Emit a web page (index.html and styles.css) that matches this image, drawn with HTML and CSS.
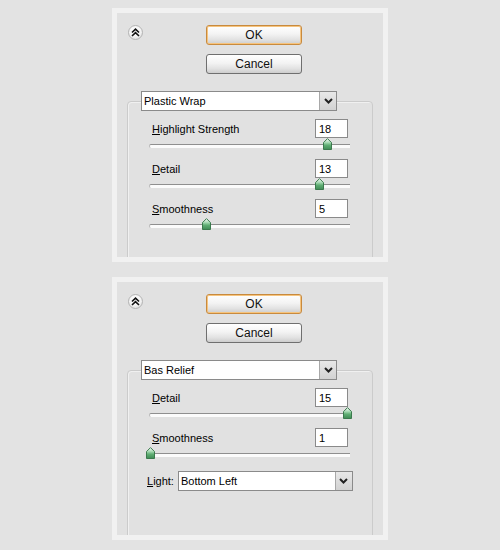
FILE: index.html
```html
<!DOCTYPE html>
<html lang="en">
<head>
    <meta charset="UTF-8">
    <title>Filter Options</title>
    <link rel="stylesheet" href="styles.css">
</head>
<body>
<!-- shared fill for the slider thumbs -->
<svg class="defs" width="0" height="0">
    <defs>
        <linearGradient id="thumbFill" x1="0" y1="0" x2="0" y2="1">
            <stop offset="0" stop-color="#ffffff"/>
            <stop offset="0.35" stop-color="#a8dab4"/>
            <stop offset="0.6" stop-color="#5fae73"/>
            <stop offset="1" stop-color="#3f8a55"/>
        </linearGradient>
    </defs>
</svg>
<main class="page">

    <!-- Plastic Wrap -->
    <section class="dialog dialog-short">
        <div class="dialog-head">
            <button class="collapse" type="button">
                <svg width="9" height="9" viewBox="0 0 9 9"><path d="M1 4.5 L4.5 1.2 L8 4.5 M1 8 L4.5 4.7 L8 8" fill="none" stroke="#111" stroke-width="1.6"/></svg>
            </button>
            <div class="actions">
                <button class="btn btn-default" type="button">OK</button>
                <button class="btn" type="button">Cancel</button>
            </div>
        </div>
        <fieldset class="filter-box">
            <legend class="picker picker-filter">
                <span class="picker-value">Plastic Wrap</span>
                <span class="picker-arrow"><svg width="9" height="6" viewBox="0 0 9 6"><path d="M1 1 L4.5 4.5 L8 1" fill="none" stroke="#222" stroke-width="2"/></svg></span>
            </legend>
            <div class="param">
                <div class="param-head">
                    <label class="param-label"><u>H</u>ighlight Strength</label>
                    <input class="param-value" type="text" value="18">
                </div>
                <div class="slider"><div class="slider-range">
                    <svg class="thumb" style="left:90%" width="9" height="12" viewBox="0 0 9 12"><path d="M4.5 0.6 L8.5 4.6 V11.5 H0.5 V4.6 Z" fill="url(#thumbFill)" stroke="#3b7a4d"/></svg>
                </div></div>
            </div>
            <div class="param">
                <div class="param-head">
                    <label class="param-label"><u>D</u>etail</label>
                    <input class="param-value" type="text" value="13">
                </div>
                <div class="slider"><div class="slider-range">
                    <svg class="thumb" style="left:85.7%" width="9" height="12" viewBox="0 0 9 12"><path d="M4.5 0.6 L8.5 4.6 V11.5 H0.5 V4.6 Z" fill="url(#thumbFill)" stroke="#3b7a4d"/></svg>
                </div></div>
            </div>
            <div class="param">
                <div class="param-head">
                    <label class="param-label"><u>S</u>moothness</label>
                    <input class="param-value" type="text" value="5">
                </div>
                <div class="slider"><div class="slider-range">
                    <svg class="thumb" style="left:28.6%" width="9" height="12" viewBox="0 0 9 12"><path d="M4.5 0.6 L8.5 4.6 V11.5 H0.5 V4.6 Z" fill="url(#thumbFill)" stroke="#3b7a4d"/></svg>
                </div></div>
            </div>
        </fieldset>
    </section>

    <!-- Bas Relief -->
    <section class="dialog dialog-tall">
        <div class="dialog-head">
            <button class="collapse" type="button">
                <svg width="9" height="9" viewBox="0 0 9 9"><path d="M1 4.5 L4.5 1.2 L8 4.5 M1 8 L4.5 4.7 L8 8" fill="none" stroke="#111" stroke-width="1.6"/></svg>
            </button>
            <div class="actions">
                <button class="btn btn-default" type="button">OK</button>
                <button class="btn" type="button">Cancel</button>
            </div>
        </div>
        <fieldset class="filter-box">
            <legend class="picker picker-filter">
                <span class="picker-value">Bas Relief</span>
                <span class="picker-arrow"><svg width="9" height="6" viewBox="0 0 9 6"><path d="M1 1 L4.5 4.5 L8 1" fill="none" stroke="#222" stroke-width="2"/></svg></span>
            </legend>
            <div class="param">
                <div class="param-head">
                    <label class="param-label"><u>D</u>etail</label>
                    <input class="param-value" type="text" value="15">
                </div>
                <div class="slider"><div class="slider-range">
                    <svg class="thumb" style="left:100%" width="9" height="12" viewBox="0 0 9 12"><path d="M4.5 0.6 L8.5 4.6 V11.5 H0.5 V4.6 Z" fill="url(#thumbFill)" stroke="#3b7a4d"/></svg>
                </div></div>
            </div>
            <div class="param">
                <div class="param-head">
                    <label class="param-label"><u>S</u>moothness</label>
                    <input class="param-value" type="text" value="1">
                </div>
                <div class="slider"><div class="slider-range">
                    <svg class="thumb" style="left:0%" width="9" height="12" viewBox="0 0 9 12"><path d="M4.5 0.6 L8.5 4.6 V11.5 H0.5 V4.6 Z" fill="url(#thumbFill)" stroke="#3b7a4d"/></svg>
                </div></div>
            </div>
            <div class="light-row">
                <label class="light-label"><u>L</u>ight:</label>
                <div class="picker picker-light">
                    <span class="picker-value">Bottom Left</span>
                    <span class="picker-arrow"><svg width="9" height="6" viewBox="0 0 9 6"><path d="M1 1 L4.5 4.5 L8 1" fill="none" stroke="#222" stroke-width="2"/></svg></span>
                </div>
            </div>
        </fieldset>
    </section>

</main>
</body>
</html>
```

FILE: styles.css
```css
*{
    margin:0;
    padding:0;
    box-sizing:border-box;
}
body{
    background-color:#e3e3e3;
    font-family:"Liberation Sans", Arial, sans-serif;
    font-size:11px;
    color:#000;
}
.defs{
    position:absolute;
}
.page{
    display:flex;
    flex-direction:column;
    align-items:center;
    gap:15px;
    padding-top:8px;
}

/* dialog panel */
.dialog{
    width:276px;
    border:5px solid #f1f1f1;
    background-color:#e1e1e1;
    overflow:hidden;
}
.dialog-short{
    height:254px;
}
.dialog-tall{
    height:263px;
}
.dialog-head{
    display:flex;
    align-items:flex-start;
    padding:12px 0 0 11px;
}
.collapse{
    width:15px;
    height:15px;
    border-radius:50%;
    border:1px solid #b4b4b4;
    background:radial-gradient(circle at 45% 35%, #ffffff 0%, #f2f2f2 55%, #cfcfcf 100%);
    display:flex;
    align-items:center;
    justify-content:center;
}
.actions{
    display:flex;
    flex-direction:column;
    gap:9px;
    margin-left:63px;
}
.btn{
    width:96px;
    height:20px;
    border:1px solid #6f6f6f;
    border-radius:3px;
    background:linear-gradient(#ffffff, #f3f3f3 45%, #e2e2e2 75%, #cdcdcd);
    font-family:"Liberation Sans", Arial, sans-serif;
    font-size:12px;
    color:#111;
}
.btn-default{
    border-color:#c88a3e;
    box-shadow:inset 0 0 0 1px #f6c47e;
}

/* group box with the filter picker as its legend */
.filter-box{
    margin:17px 10px 0;
    border:1px solid #cbcbcb;
    border-radius:4px;
    padding:8px 13px 80px;
    box-shadow:inset 1px 1px 0 #f0f0f0;
}
.picker{
    display:flex;
    align-items:stretch;
    height:20px;
    background-color:#fff;
    border:1px solid #8a8a8a;
}
.picker-filter{
    width:196px;
    padding:0;
}
.picker-value{
    flex:1;
    padding-left:2px;
    line-height:18px;
    font-size:11px;
    white-space:nowrap;
}
.picker-arrow{
    width:17px;
    margin:0 0 0 auto;
    border-left:1px solid #a8a8a8;
    background:linear-gradient(#e8e8e8, #d2d2d2);
    display:flex;
    align-items:center;
    justify-content:center;
}

/* one slider parameter */
.param{
    margin:0 9px 9px 8px;
}
.param-head{
    display:flex;
    justify-content:space-between;
    align-items:center;
    height:19px;
    padding-right:2px;
}
.param-label{
    padding-left:3px;
    font-size:11px;
}
.param-value{
    width:33px;
    height:19px;
    border:1px solid #8a8a8a;
    padding-left:3px;
    font-family:"Liberation Sans", Arial, sans-serif;
    font-size:11px;
    background-color:#fff;
    outline:none;
}
.slider{
    position:relative;
    height:12px;
}
.slider::before{
    content:"";
    position:absolute;
    left:0;
    right:0;
    top:6px;
    height:3px;
    border-top:1px solid #8f8f8f;
    border-left:1px solid #b8b8b8;
    border-radius:2px 0 0 2px;
    background-color:#fbfbfb;
}
.slider-range{
    position:absolute;
    top:0;
    bottom:0;
    left:2px;
    right:2px;
}
.thumb{
    position:absolute;
    top:0;
    margin-left:-5px;
}

/* light direction row */
.light-row{
    display:flex;
    align-items:center;
    margin:12px 0 0 6px;
    gap:4px;
}
.light-label{
    font-size:11px;
}
.picker-light{
    width:175px;
}
```
